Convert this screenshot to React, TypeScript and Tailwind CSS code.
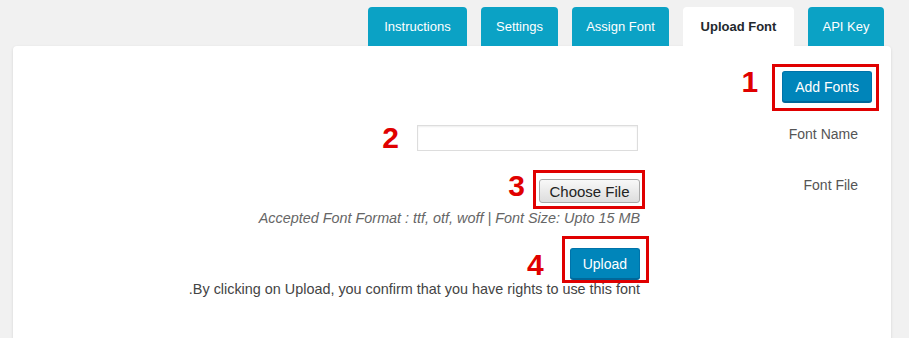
import type { ReactNode } from "react";

const tabs = [
  { label: "Instructions", w: "w-[99px]" },
  { label: "Settings", w: "w-[77px]" },
  { label: "Assign Font", w: "w-[97px]" },
  { label: "Upload Font", w: "w-[111px]", active: true },
  { label: "API Key", w: "w-[76px]" },
];

function Num({ n, className }: { n: string; className: string }) {
  return (
    <span className={"text-[30px] leading-[30px] font-bold text-[#e00000] " + className}>
      {n}
    </span>
  );
}

function Marked({ children, box }: { children: ReactNode; box: string }) {
  return (
    <div className="relative flex">
      {children}
      <span className={"absolute border-[3px] border-[#e00000] pointer-events-none " + box} />
    </div>
  );
}

function BlueButton({ label }: { label: string }) {
  return (
    <button className="h-[31px] px-[12px] rounded-[3px] bg-[#0085ba] border border-[#0073aa] border-b-[#006799] shadow-[0_1px_0_#006799] text-white text-[14px] leading-none">
      {label}
    </button>
  );
}

export default function App() {
  return (
    <div
      className="h-[338px] bg-[#f1f1f1] pl-[13px] pr-[18px] pt-[7px] overflow-hidden"
      style={{ fontFamily: '"Liberation Sans", Arial, sans-serif' }}
    >
      {/* tabs */}
      <div className="flex justify-end pr-[7px] gap-[14px]">
        {tabs.map((t) => (
          <div
            key={t.label}
            className={
              "h-[39px] rounded-t-[4px] flex items-center justify-center text-[13px] " +
              t.w +
              (t.active ? " bg-white text-[#23282d] font-bold" : " bg-[#0ba2c5] text-white")
            }
          >
            {t.label}
          </div>
        ))}
      </div>

      {/* panel */}
      <div className="bg-white rounded-[4px] shadow-[0_1px_3px_rgba(0,0,0,0.12)] h-[300px] pr-[19px] pt-[25px]">
        {/* add fonts */}
        <div className="flex justify-end items-start">
          <Num n="1" className="-mt-[4px] mr-[24px]" />
          <Marked box="-left-[10px] -right-[7px] -top-[7px] -bottom-[9px]">
            <BlueButton label="Add Fonts" />
          </Marked>
        </div>

        <div className="pr-[14px]">
          {/* font name */}
          <div className="flex justify-end items-start mt-[23px]">
            <div className="flex items-start mr-[2px]">
              <Num n="2" className="-mt-[2px] mr-[18px]" />
              <input
                type="text"
                className="w-[221px] h-[26px] border border-[#ddd] shadow-[inset_0_1px_2px_rgba(0,0,0,0.07)] bg-white outline-none"
              />
            </div>
            <div className="w-[218px] text-right text-[14px] leading-[17px] text-[#555] mt-[1px]">
              Font Name
            </div>
          </div>

          {/* font file */}
          <div className="flex justify-end items-start mt-[26px]">
            <div className="flex flex-col items-end">
              <div className="flex items-start">
                <Num n="3" className="-mt-[8px] mr-[14px]" />
                <Marked box="-left-[6px] -right-[5px] -top-[9px] -bottom-[6px]">
                  <button className="w-[101px] h-[24px] rounded-[3px] border border-[#a9a9a9] bg-gradient-to-b from-[#f8f8f8] to-[#dddddd] text-[15px] leading-none text-[#222]">
                    Choose File
                  </button>
                </Marked>
              </div>
              <p className="mt-[7px] text-[14.4px] leading-[16px] italic text-[#666]">
                Accepted Font Format : ttf, otf, woff | Font Size: Upto 15 MB
              </p>
              <div className="flex items-start mt-[22px]">
                <Num n="4" className="mt-[2px] mr-[26px]" />
                <Marked box="-left-[8px] -right-[9px] -top-[12px] -bottom-[4px]">
                  <BlueButton label="Upload" />
                </Marked>
              </div>
              <p className="mt-[1px] text-[14.4px] leading-[17px] text-[#444]">
                .By clicking on Upload, you confirm that you have rights to use this font
              </p>
            </div>
            <div className="w-[218px] text-right text-[14px] leading-[17px] text-[#555] -mt-[2px]">
              Font File
            </div>
          </div>
        </div>
      </div>
    </div>
  );
}
